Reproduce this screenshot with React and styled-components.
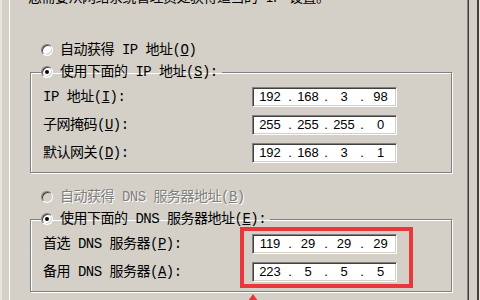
import React from 'react';
import styled, { createGlobalStyle } from 'styled-components';

const GlobalStyle = createGlobalStyle`
  html, body {
    margin: 0;
    padding: 0;
    background: #d4d0c8;
  }
  body {
    font-family: "Liberation Mono", "Noto Sans CJK SC", monospace;
    color: #000;
  }
`;

const Window = styled.div`
  width: 480px;
  height: 300px;
  overflow: hidden;
  display: flex;
  padding-left: 9px;
  box-sizing: border-box;
  background: #d4d0c8;
  box-shadow: inset 2px 0 0 #e6e4de, inset -1px 0 0 #e6e4de, inset -3px 0 0 #404040;
`;

const Page = styled.div`
  width: 460px;
  flex: none;
  box-sizing: border-box;
  display: flex;
  flex-direction: column;
  border-left: 1px solid #ffffff;
  border-right: 1px solid #404040;
  box-shadow: inset -1px 0 0 #808080;
  overflow: hidden;
`;

const Intro = styled.div`
  margin: -9px 0 0 18px;
  font-size: 14px;
  line-height: 14px;
  letter-spacing: -0.5px;
  white-space: nowrap;
`;

const RadioRow = styled.div`
  display: flex;
  align-items: center;
  gap: 7px;
  height: 16px;
  margin: ${p => p.$top || 0}px 0 6px 31px;
  font-size: 14px;
  line-height: 16px;
  letter-spacing: -0.5px;
  white-space: nowrap;
  color: ${p => (p.$disabled ? '#808080' : '#000')};
  text-shadow: ${p => (p.$disabled ? '1px 1px 0 #ffffff' : 'none')};
`;

const Radio = styled.span`
  position: relative;
  flex: none;
  width: 12px;
  height: 12px;
  box-sizing: border-box;
  border-radius: 50%;
  border: 1px solid;
  border-color: #808080 #ffffff #ffffff #808080;
  background: ${p => (p.$disabled ? '#d4d0c8' : '#ffffff')};
  box-shadow: inset 1px 1px 0 #404040, inset -1px -1px 0 #d4d0c8;

  &::after {
    content: '';
    display: ${p => (p.$checked ? 'block' : 'none')};
    position: absolute;
    left: 3px;
    top: 3px;
    width: 4px;
    height: 4px;
    border-radius: 50%;
    background: #000;
  }
`;

const Group = styled.fieldset`
  margin: 0 0 0 20px;
  width: 422px;
  min-width: 0;
  box-sizing: border-box;
  padding: 0 10px 3px 10px;
  border: 1px solid #808080;
  box-shadow: inset 1px 1px 0 #ffffff, 1px 1px 0 #ffffff;
`;

const Legend = styled.legend`
  padding: 0 4px 0 0;
  margin: 0;
  display: flex;
  align-items: center;
  gap: 7px;
  height: 16px;
  font-size: 14px;
  line-height: 16px;
  letter-spacing: -0.5px;
  white-space: nowrap;
`;

const Body = styled.div`
  display: flex;
`;

const LabelCol = styled.div`
  width: 199px;
  box-sizing: border-box;
  padding: 7px 0 0 2px;
  display: flex;
  flex-direction: column;
  gap: 8px;
`;

const Label = styled.div`
  height: 20px;
  font-size: 14px;
  line-height: 20px;
  letter-spacing: -0.5px;
  white-space: nowrap;
`;

const FieldCol = styled.div`
  width: 173px;
  box-sizing: border-box;
  padding: 3px 8px 2px;
  border: 4px solid ${p => (p.$highlight ? '#e8383c' : 'transparent')};
  display: flex;
  flex-direction: column;
  gap: 8px;
`;

const IpField = styled.div`
  width: 145px;
  height: 20px;
  box-sizing: border-box;
  background: #ffffff;
  border: 1px solid;
  border-color: #808080 #ffffff #ffffff #808080;
  box-shadow: inset 1px 1px 0 #404040, inset -1px -1px 0 #d4d0c8;
  display: grid;
  grid-template-columns: 34px 6px 30px 6px 30px 6px 1fr;
  align-items: center;
  font-family: "Liberation Sans", Arial, sans-serif;
  font-size: 13px;
  line-height: 18px;
`;

const Octet = styled.span`
  text-align: center;
`;

const Dot = styled.span`
  text-align: center;
`;

const Arrow = styled.svg`
  flex: none;
  margin: 2px 0 0 237px;
`;

const Key = ({ k }) => (
  <>
    (<u>{k}</u>)
  </>
);

const IpInput = ({ value }) => {
  const parts = value.split('.');
  return (
    <IpField>
      {parts.map((p, i) => (
        <React.Fragment key={i}>
          {i > 0 && <Dot>.</Dot>}
          <Octet>{p}</Octet>
        </React.Fragment>
      ))}
    </IpField>
  );
};

const FieldGroup = ({ legend, rows, highlight }) => (
  <Group>
    <Legend>
      <Radio $checked />
      {legend}
    </Legend>
    <Body>
      <LabelCol>
        {rows.map(r => (
          <Label key={r.value}>{r.label}</Label>
        ))}
      </LabelCol>
      <FieldCol $highlight={highlight}>
        {rows.map(r => (
          <IpInput key={r.value} value={r.value} />
        ))}
      </FieldCol>
    </Body>
  </Group>
);

export default function App() {
  return (
    <>
      <GlobalStyle />
      <Window>
        <Page>
          <Intro>您需要从网络系统管理员处获得适当的 IP 设置。</Intro>

          <RadioRow $top={37}>
            <Radio />
            <span>自动获得 IP 地址<Key k="O" /></span>
          </RadioRow>
          <FieldGroup
            legend={<span>使用下面的 IP 地址<Key k="S" />:</span>}
            rows={[
              { label: <>IP 地址<Key k="I" />:</>, value: '192.168.3.98' },
              { label: <>子网掩码<Key k="U" />:</>, value: '255.255.255.0' },
              { label: <>默认网关<Key k="D" />:</>, value: '192.168.3.1' },
            ]}
          />

          <RadioRow $top={16} $disabled>
            <Radio $disabled />
            <span>自动获得 DNS 服务器地址<Key k="B" /></span>
          </RadioRow>
          <FieldGroup
            highlight
            legend={<span>使用下面的 DNS 服务器地址<Key k="E" />:</span>}
            rows={[
              { label: <>首选 DNS 服务器<Key k="P" />:</>, value: '119.29.29.29' },
              { label: <>备用 DNS 服务器<Key k="A" />:</>, value: '223.5.5.5' },
            ]}
          />

          <Arrow width="12" height="12" viewBox="0 0 12 12">
            <path d="M6 0 L11 7 L7.5 6 L7.5 12 L4.5 12 L4.5 6 L1 7 Z" fill="#e8383c" />
          </Arrow>
        </Page>
      </Window>
    </>
  );
}
